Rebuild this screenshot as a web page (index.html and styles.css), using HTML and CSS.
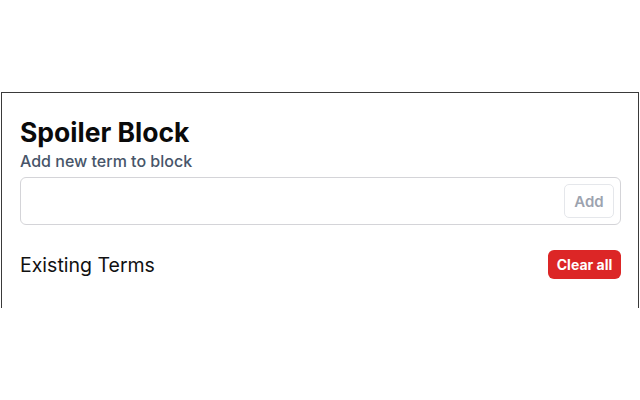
FILE: index.html
```html
<!DOCTYPE html>
<html>
<head>
<meta charset="utf-8">
<link rel="stylesheet" href="styles.css">
</head>
<body>
<div class="popup">
  <h1 class="title">Spoiler Block</h1>
  <label class="label" for="term">Add new term to block</label>
  <div class="field">
    <input id="term" class="input" type="text">
    <button class="add-btn">Add</button>
  </div>
  <div class="terms-head">
    <h2 class="terms-title">Existing Terms</h2>
    <button class="clear-btn">Clear all</button>
  </div>
</div>
</body>
</html>
```
FILE: styles.css
```css
html, body {
  margin: 0;
  padding: 0;
  background: #fff;
  font-family: Inter, "Noto Sans", sans-serif;
  color: #111;
}
body {
  padding-top: 92px;
}
.popup {
  margin-left: 1px;
  width: 638px;
  height: 216px;
  border: 1px solid #3a3a3a;
  border-bottom: none;
  padding: 23px 17px 0 18px;
  box-sizing: border-box;
}
.title {
  margin: 0;
  font-size: 26.5px;
  font-weight: 700;
  line-height: 32px;
  color: #0a0a0a;
}
.label {
  display: block;
  margin-top: 3px;
  font-size: 16px;
  font-weight: 500;
  line-height: 20px;
  color: #475569;
}
.field {
  margin-top: 6px;
  height: 48px;
  border: 1px solid #d4d4d8;
  border-radius: 6px;
  display: flex;
  align-items: center;
  padding: 0 6px 0 10px;
  box-sizing: border-box;
}
.input {
  flex: 1;
  border: none;
  outline: none;
  height: 30px;
  font-size: 15px;
  background: transparent;
}
.add-btn {
  height: 34px;
  width: 50px;
  border: 1px solid #e5e7eb;
  border-radius: 5px;
  background: #fff;
  color: #9ca3af;
  font-family: Inter, sans-serif;
  font-size: 15px;
  font-weight: 600;
  padding: 0;
}
.terms-head {
  margin-top: 25px;
  display: flex;
  justify-content: space-between;
  align-items: center;
}
.terms-title {
  margin: 0;
  font-size: 19.5px;
  font-weight: 400;
  line-height: 28px;
  color: #111;
}
.clear-btn {
  height: 29px;
  width: 73px;
  border: none;
  border-radius: 6px;
  background: #dc2626;
  color: #fff;
  font-family: Inter, sans-serif;
  font-size: 14px;
  font-weight: 700;
  padding: 0;
}
```
